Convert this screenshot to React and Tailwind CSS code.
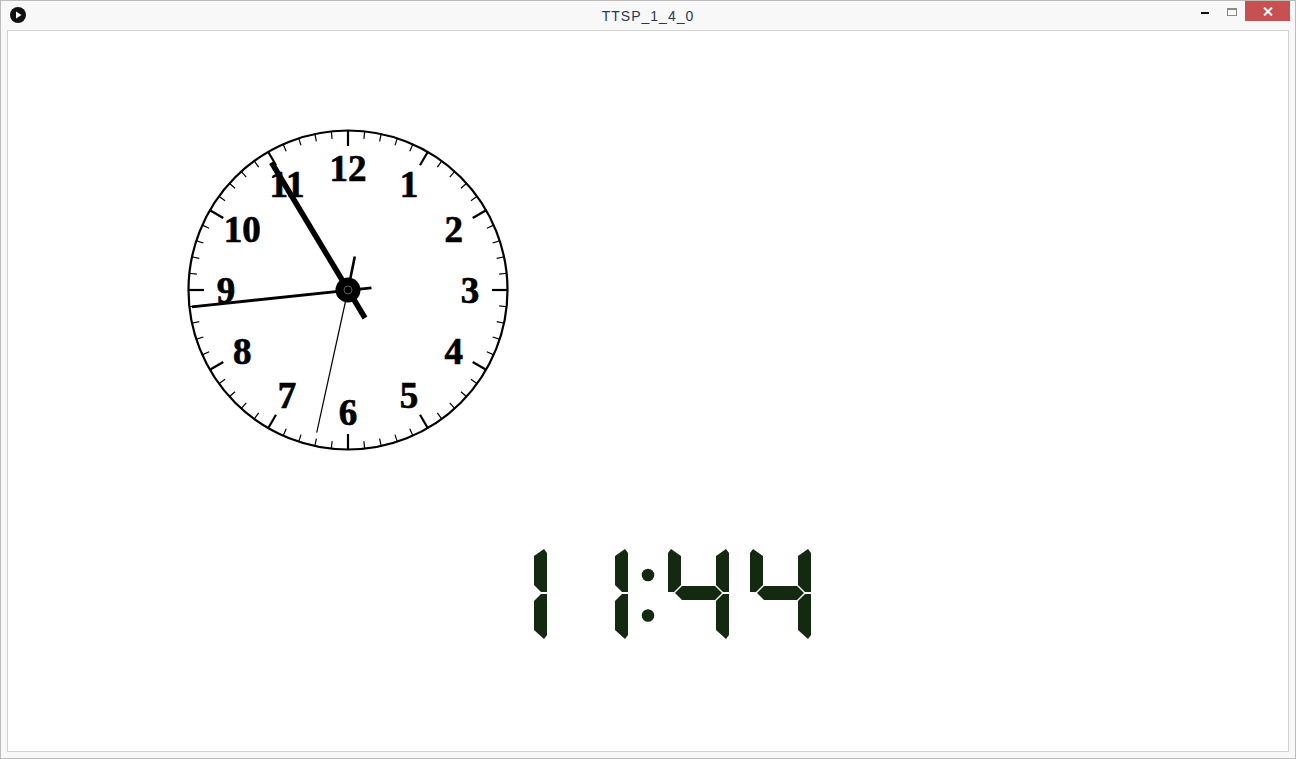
import React from "react";

const CX = 348;
const CY = 290;
const SEG = "#132a10";

const segs = {
  f: "0,5 3,1 13,8 13,37 6,44 0,44",
  e: "0,46 6,46 13,53 13,82 3,91 0,87",
  b: "61,5 58,1 48,8 48,37 55,44 61,44",
  c: "61,46 55,46 48,53 48,82 58,91 61,87",
  g: "7,45 14,38 47,38 54,45 47,52 14,52",
};

function Digit({ x, y, on }) {
  return (
    <g transform={`translate(${x} ${y})`}>
      {on.map((s) => (
        <polygon key={s} points={segs[s]} fill={SEG} />
      ))}
    </g>
  );
}

function Clock() {
  const ticks = [];
  for (let i = 0; i < 60; i++) {
    const a = (i * 6 * Math.PI) / 180;
    const major = i % 5 === 0;
    const r1 = 160;
    const r2 = major ? 144 : 152;
    const sx = Math.sin(a);
    const sy = -Math.cos(a);
    ticks.push(
      <line
        key={i}
        x1={CX + r1 * sx}
        y1={CY + r1 * sy}
        x2={CX + r2 * sx}
        y2={CY + r2 * sy}
        stroke="#000"
        strokeWidth={major ? 2.2 : 1.2}
      />
    );
  }
  const nums = [];
  for (let n = 1; n <= 12; n++) {
    const a = (n * 30 * Math.PI) / 180;
    const x = CX + 122 * Math.sin(a);
    const y = CY - 122 * Math.cos(a);
    nums.push(
      <text
        key={n}
        x={x}
        y={y + 12.5}
        textAnchor="middle"
        fontFamily="'Liberation Serif', 'Times New Roman', serif"
        fontWeight="bold"
        fontSize="37"
        fill="#000"
        stroke="#000"
        strokeWidth="0.7"
      >
        {n}
      </text>
    );
  }
  return (
    <g>
      <circle cx={CX} cy={CY} r={159.5} fill="#fff" stroke="#000" strokeWidth="2.2" />
      {ticks}
      {nums}
      {/* thick hand */}
      <line x1={365} y1={318} x2={271.5} y2={162.5} stroke="#000" strokeWidth="5.5" />
      {/* medium hand */}
      <line x1={371.5} y1={287.8} x2={192} y2={306.8} stroke="#000" strokeWidth="2.8" />
      {/* thin hand */}
      <line x1={CX} y1={CY} x2={316.7} y2={432.7} stroke="#000" strokeWidth="1.2" />
      <line x1={CX} y1={CY} x2={354.8} y2={256.5} stroke="#000" strokeWidth="2.6" />
      <circle cx={CX} cy={CY} r={12.5} fill="#000" />
      <circle cx={CX} cy={CY} r={4} fill="none" stroke="#5a5a5a" strokeWidth="1" />
    </g>
  );
}

export default function App() {
  return (
    <div className="w-[1296px] h-[759px] border border-[#bcbcbc] bg-[#f8f8f8] flex flex-col overflow-hidden">
      <div className="h-[29px] grid grid-cols-[1fr_auto_1fr] items-start">
        <div className="flex items-center h-[28px] pl-[9px]">
          <svg width="16" height="16" viewBox="0 0 16 16">
            <circle cx="8" cy="8" r="8" fill="#111" />
            <polygon points="6,4.5 11.5,8 6,11.5" fill="#fff" />
          </svg>
        </div>
        <div
          className="h-[28px] flex items-center pt-[3px] text-[14px] tracking-[1px] text-[#253b55]"
          style={{ fontFamily: "'Liberation Sans', Arial, sans-serif" }}
        >
          TTSP_1_4_0
        </div>
        <div className="flex justify-end items-start pr-[5px]">
          <div className="w-[26px] h-[20px] flex items-center justify-center">
            <div className="w-[8px] h-[2px] bg-[#111] mt-[4px] mr-[2px]" />
          </div>
          <div className="w-[26px] h-[20px] flex items-start justify-center pt-[7px]">
            <div className="w-[10px] h-[8px] border border-[#8a8a8a] border-t-2" />
          </div>
          <div className="w-[45px] h-[20px] bg-[#c75050] flex items-center justify-center">
            <svg width="10" height="9" viewBox="0 0 10 9">
              <path d="M1 0.5 L9 8.5 M9 0.5 L1 8.5" stroke="#fff" strokeWidth="2" />
            </svg>
          </div>
        </div>
      </div>
      <div className="flex-1 px-[6px] pb-[6px] flex">
        <div className="flex-1 border border-[#d2d2d2] bg-white">
          <svg width="1280" height="720" viewBox="8 31 1280 720" className="block">
            <Clock />
            <Digit x={486} y={548} on={["b", "c"]} />
            <Digit x={567} y={548} on={["b", "c"]} />
            <circle cx={648} cy={575} r={6.3} fill={SEG} />
            <circle cx={648} cy={615.5} r={6.3} fill={SEG} />
            <Digit x={668} y={548} on={["f", "b", "g", "c"]} />
            <Digit x={750} y={548} on={["f", "b", "g", "c"]} />
          </svg>
        </div>
      </div>
    </div>
  );
}
